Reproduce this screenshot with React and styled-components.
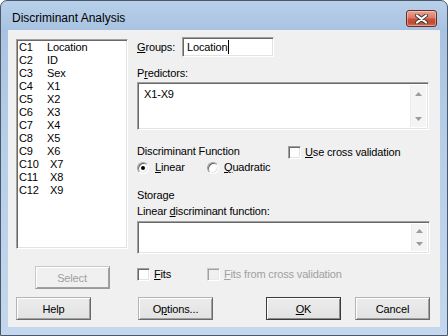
import React from "react";
import styled, { createGlobalStyle, css } from "styled-components";

const Global = createGlobalStyle`
  html, body { margin: 0; padding: 0; background: #ffffff; }
  body { font-family: "Liberation Sans", Arial, sans-serif; }
  * { box-sizing: border-box; }
`;

const sunken = css`
  border: 1px solid;
  border-color: #a0a0a0 #ffffff #ffffff #a0a0a0;
  box-shadow: inset 1px 1px 0 #696969, inset -1px -1px 0 #e3e3e3;
  background: #ffffff;
`;

const Window = styled.div`
  width: 448px;
  height: 336px;
  border: 1px solid #4c5868;
  border-radius: 7px 7px 0 0;
  background: linear-gradient(#b8d0ea 0px, #a8c3e1 29px, #b6cee8 140px, #c3d8ee 100%);
  display: flex;
  flex-direction: column;
  overflow: hidden;
`;

const TitleBar = styled.div`
  height: 29px;
  display: flex;
  align-items: flex-start;
  padding-left: 11px;
  flex: none;
`;

const Title = styled.div`
  margin-top: 10px;
  font-size: 12px;
  line-height: 15px;
  color: #000;
`;

const CloseButton = styled.div`
  margin-left: auto;
  margin-right: 10px;
  margin-top: 9px;
  width: 31px;
  height: 17px;
  border: 1px solid #6e2b22;
  border-radius: 3px;
  background: linear-gradient(#e8a596 0%, #d97a66 45%, #c8503a 55%, #c24a33 80%, #d0735a 100%);
  box-shadow: inset 0 0 0 1px rgba(255, 255, 255, 0.35);
  display: flex;
  align-items: center;
  justify-content: center;
`;

const Client = styled.div`
  margin: 0 7px;
  height: 297px;
  background: #f0f0f0;
  padding: 7px 0 0 8px;
  flex: none;
  letter-spacing: -0.15px;
`;

const Columns = styled.div`
  display: grid;
  grid-template-columns: 112px 293px;
  column-gap: 9px;
`;

const LeftColumn = styled.div`
  display: flex;
  flex-direction: column;
`;

const ListBox = styled.div`
  ${sunken};
  margin-top: 2px;
  height: 210px;
  padding: 1px 0 0 2px;
`;

const ListRow = styled.div`
  display: grid;
  grid-template-columns: 28px auto;
  font-size: 11px;
  line-height: 13px;
  height: 13px;
  color: #000;
  white-space: nowrap;
`;

const ListName = styled.span`
  padding-left: ${(p) => p.$shift}px;
`;

const Button = styled.div`
  width: 75px;
  height: 23px;
  display: flex;
  align-items: center;
  justify-content: center;
  font-size: 11px;
  color: ${(p) => (p.$disabled ? "#a0a0a0" : "#000")};
  background: ${(p) => (p.$disabled ? "#f0f0f0" : "linear-gradient(#ececec, #e2e2e2)")};
  border: 1px solid;
  border-color: ${(p) =>
    p.$default
      ? "#3c3c3c"
      : p.$disabled
      ? "#c8c8c8 #9a9a9a #9a9a9a #c8c8c8"
      : "#b4b4b4 #6a6a6a #6a6a6a #b4b4b4"};
  box-shadow: ${(p) =>
    p.$default
      ? "inset 1px 1px 0 #ffffff, inset -1px -1px 0 #8a8a8a"
      : "inset 1px 1px 0 #ffffff, inset -1px -1px 0 #a0a0a0"};
`;

const SelectButton = styled(Button)`
  align-self: center;
  margin-top: 17px;
`;

const RightColumn = styled.div`
  display: flex;
  flex-direction: column;
  font-size: 11px;
  color: #000;
`;

const GroupsRow = styled.div`
  display: flex;
  align-items: center;
  height: 20px;
`;

const Label = styled.div`
  font-size: 11px;
  line-height: 13px;
  height: 13px;
  white-space: nowrap;
  color: ${(p) => (p.$disabled ? "#a0a0a0" : "#000")};
  margin-top: ${(p) => p.$top || 0}px;
  width: ${(p) => (p.$width ? p.$width + "px" : "auto")};
`;

const Key = styled.span`
  text-decoration: underline;
  text-underline-offset: 1px;
`;

const TextField = styled.div`
  ${sunken};
  width: 92px;
  height: 20px;
  display: flex;
  align-items: center;
  padding-left: 4px;
  font-size: 11px;
  line-height: 13px;
`;

const Caret = styled.span`
  display: inline-block;
  width: 1px;
  height: 14px;
  background: #000;
  margin-left: 1px;
`;

const MultiBox = styled.div`
  ${sunken};
  margin-top: ${(p) => p.$top}px;
  width: ${(p) => p.$width}px;
  height: ${(p) => p.$height}px;
  display: flex;
  padding: 2px;
`;

const BoxText = styled.div`
  flex: 1;
  padding: 3px 0 0 4px;
  font-size: 11px;
  line-height: 13px;
`;

const ScrollBar = styled.div`
  width: 16px;
  display: flex;
  flex-direction: column;
  justify-content: space-between;
  background: #f4f4f4;
  border-left: 1px solid #ececec;
`;

const ArrowButton = styled.div`
  flex: 0 1 17px;
  display: flex;
  align-items: center;
  justify-content: center;
`;

const SectionRow = styled.div`
  display: grid;
  grid-template-columns: 151px auto;
  margin-top: ${(p) => p.$top}px;
`;

const Stack = styled.div`
  display: flex;
  flex-direction: column;
`;

const OptionRow = styled.div`
  display: grid;
  grid-template-columns: 70px auto;
  margin-top: ${(p) => p.$top}px;
`;

const Option = styled.div`
  display: flex;
  align-items: center;
  height: 13px;
  gap: ${(p) => p.$gap}px;
  font-size: 11px;
  line-height: 13px;
  white-space: nowrap;
  color: ${(p) => (p.$disabled ? "#a0a0a0" : "#000")};
  margin-top: ${(p) => p.$top || 0}px;
`;

const CheckBox = styled.span`
  ${sunken};
  width: 13px;
  height: 13px;
  flex: none;
  ${(p) =>
    p.$disabled &&
    css`
      background: #f0f0f0;
      border-color: #c8c8c8 #ffffff #ffffff #c8c8c8;
      box-shadow: inset 1px 1px 0 #a0a0a0, inset -1px -1px 0 #e9e9e9;
    `}
`;

const Radio = styled.span`
  ${sunken};
  width: 12px;
  height: 12px;
  border-radius: 50%;
  flex: none;
  position: relative;
  ${(p) =>
    p.$checked &&
    css`
      &::after {
        content: "";
        position: absolute;
        left: 3px;
        top: 3px;
        width: 4px;
        height: 4px;
        border-radius: 50%;
        background: #000;
      }
    `}
`;

const ButtonBar = styled.div`
  display: grid;
  grid-template-columns: 112px 293px;
  column-gap: 9px;
  margin-top: 8px;
`;

const ButtonGroup = styled.div`
  display: flex;
  gap: 14px;
`;

const Spacer = styled.div`
  flex: 1;
`;

const OptionsButton = styled(Button)`
  margin-left: 1px;
`;

const UpArrow = () => (
  <svg width="7" height="4" viewBox="0 0 7 4">
    <path d="M0 4 L3.5 0 L7 4 Z" fill="#9c9c9c" />
  </svg>
);

const DownArrow = () => (
  <svg width="7" height="4" viewBox="0 0 7 4">
    <path d="M0 0 L7 0 L3.5 4 Z" fill="#9c9c9c" />
  </svg>
);

const CloseGlyph = () => (
  <svg width="13" height="10" viewBox="0 0 13 10">
    <path d="M2 1.5 L11 8.5 M11 1.5 L2 8.5" stroke="#3d3d3d" strokeWidth="4" strokeLinecap="round" />
    <path d="M2 1.5 L11 8.5 M11 1.5 L2 8.5" stroke="#ffffff" strokeWidth="2.2" strokeLinecap="round" />
  </svg>
);

const columns = [
  ["C1", "Location"],
  ["C2", "ID"],
  ["C3", "Sex"],
  ["C4", "X1"],
  ["C5", "X2"],
  ["C6", "X3"],
  ["C7", "X4"],
  ["C8", "X5"],
  ["C9", "X6"],
  ["C10", "X7"],
  ["C11", "X8"],
  ["C12", "X9"],
];

const Scroll = () => (
  <ScrollBar>
    <ArrowButton>
      <UpArrow />
    </ArrowButton>
    <ArrowButton>
      <DownArrow />
    </ArrowButton>
  </ScrollBar>
);

export default function App() {
  return (
    <>
      <Global />
      <Window>
        <TitleBar>
          <Title>Discriminant Analysis</Title>
          <CloseButton>
            <CloseGlyph />
          </CloseButton>
        </TitleBar>
        <Client>
          <Columns>
            <LeftColumn>
              <ListBox>
                {columns.map(([id, name]) => (
                  <ListRow key={id}>
                    <span>{id}</span>
                    <ListName $shift={id.length > 2 ? 3 : 0}>{name}</ListName>
                  </ListRow>
                ))}
              </ListBox>
              <SelectButton $disabled>Select</SelectButton>
            </LeftColumn>
            <RightColumn>
              <GroupsRow>
                <Label $width={45}>
                  <Key>G</Key>roups:
                </Label>
                <TextField>
                  Location
                  <Caret />
                </TextField>
              </GroupsRow>
              <Label $top={10}>
                P<Key>r</Key>edictors:
              </Label>
              <MultiBox $top={2} $width={292} $height={48}>
                <BoxText>X1-X9</BoxText>
                <Scroll />
              </MultiBox>
              <SectionRow $top={15}>
                <Stack>
                  <Label>Discriminant Function</Label>
                  <OptionRow $top={3}>
                    <Option $gap={6}>
                      <Radio $checked />
                      <span>
                        <Key>L</Key>inear
                      </span>
                    </Option>
                    <Option $gap={5}>
                      <Radio />
                      <span>
                        <Key>Q</Key>uadratic
                      </span>
                    </Option>
                  </OptionRow>
                </Stack>
                <Option $gap={4} $top={1}>
                  <CheckBox />
                  <span>
                    <Key>U</Key>se cross validation
                  </span>
                </Option>
              </SectionRow>
              <Label $top={15}>Storage</Label>
              <Label $top={3}>
                Linear <Key>d</Key>iscriminant function:
              </Label>
              <MultiBox $top={3} $width={293} $height={33}>
                <BoxText />
                <Scroll />
              </MultiBox>
              <OptionRow $top={14}>
                <Option $gap={4}>
                  <CheckBox />
                  <span>
                    <Key>F</Key>its
                  </span>
                </Option>
                <Option $gap={4} $disabled>
                  <CheckBox $disabled />
                  <span>
                    <Key>F</Key>its from cross validation
                  </span>
                </Option>
              </OptionRow>
            </RightColumn>
          </Columns>
          <ButtonBar>
            <Button>Help</Button>
            <ButtonGroup>
              <OptionsButton>
                <span>
                  O<Key>p</Key>tions...
                </span>
              </OptionsButton>
              <Spacer />
              <Button $default>
                <span>
                  <Key>O</Key>K
                </span>
              </Button>
              <Button>Cancel</Button>
            </ButtonGroup>
          </ButtonBar>
        </Client>
      </Window>
    </>
  );
}
